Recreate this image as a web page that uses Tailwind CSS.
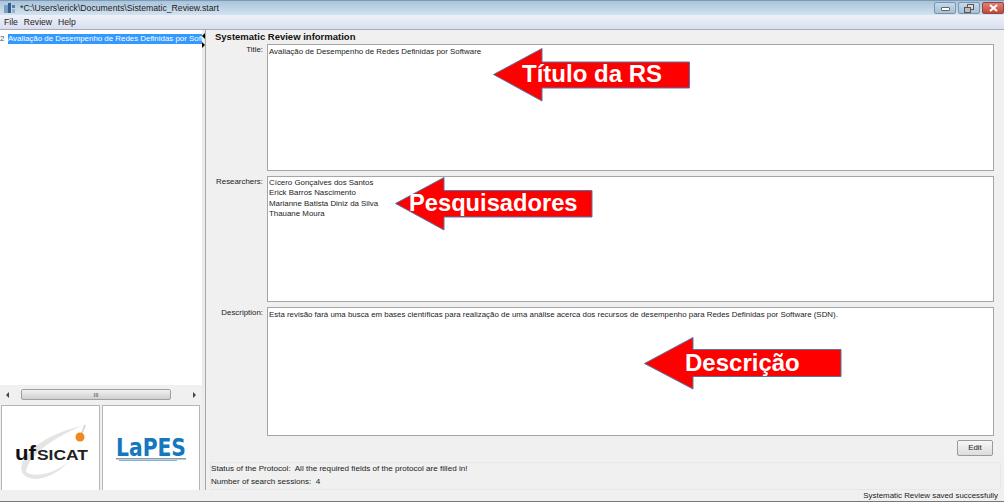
<!DOCTYPE html>
<html>
<head>
  <title>Systematic Review</title>
  <meta charset="UTF-8">
  <script src="https://cdn.jsdelivr.net/npm/@tailwindcss/browser@4"></script>
</head>
<body class="relative w-[1004px] h-[502px] overflow-hidden bg-[#f0f0f0] font-['Liberation_Sans',sans-serif] text-[7.9px] text-[#222]">

  <!-- title bar -->
  <div class="h-[15px] flex items-center justify-between border-t border-[#7f9ab5] bg-gradient-to-b from-[#a9c4da] to-[#d3e3f0]">
    <div class="flex items-center gap-[3px] pl-[3px]">
      <svg width="13" height="12" viewBox="0 0 13 12"><rect x="1" y="3" width="4" height="8" fill="#7f9cbc"/><rect x="5" y="1" width="3" height="10" fill="#2d5f96"/><rect x="9" y="3" width="3" height="3" fill="#5b7fa8"/><rect x="9" y="7" width="3" height="4" fill="#9bb2c9"/></svg>
      <span class="pl-[1px] pt-[1px] text-[8.7px] text-[#1b1b1b]">*C:\Users\erick\Documents\Sistematic_Review.start</span>
    </div>
    <div class="flex gap-[2px] h-[12px]">
      <div class="w-[22px] flex items-center justify-center border border-[#7b95ae] rounded-[2px] bg-gradient-to-b from-[#c5d9e9] to-[#a5c0d6]"><div class="w-[9px] h-[4px] mt-[2px] bg-white border border-[#666] rounded-[1px]"></div></div>
      <div class="w-[22px] flex items-center justify-center border border-[#7b95ae] rounded-[2px] bg-gradient-to-b from-[#c5d9e9] to-[#a5c0d6]">
        <svg width="10" height="9" viewBox="0 0 10 9"><rect x="3.5" y="0.5" width="6" height="5" fill="#ddd" stroke="#555"/><rect x="0.5" y="3.5" width="6" height="5" fill="#bbb" stroke="#555"/></svg>
      </div>
      <div class="w-[22px] flex items-center justify-center border border-[#8a4a40] rounded-[2px] bg-gradient-to-b from-[#dd8273] to-[#c4473a]">
        <svg width="9" height="8" viewBox="0 0 9 8"><path d="M1 1 L8 7 M8 1 L1 7" stroke="#fff" stroke-width="2"/></svg>
      </div>
    </div>
  </div>

  <!-- menu bar -->
  <div class="h-[15px] flex items-center gap-[6px] pl-[4px] pt-[1px] bg-gradient-to-b from-[#eef1f9] to-[#d9dff0] border-b border-[#a9acb3] text-[8.6px]">
    <span>File</span><span>Review</span><span>Help</span>
  </div>

  <div class="h-[460px] flex">
    <!-- left pane -->
    <div class="w-[202px] shrink-0 flex flex-col">
      <div class="h-[355px] bg-white pt-[4px] overflow-hidden">
        <div class="flex items-center h-[10px]">
          <span class="w-[8px] shrink-0 text-[#456] text-[8px] leading-none">2</span>
          <div class="w-[194px] h-[10px] leading-[10px] bg-[#3399ff] text-white whitespace-nowrap">Avaliação de Desempenho de Redes Definidas por Soft</div>
        </div>
      </div>
      <!-- horizontal scrollbar -->
      <div class="h-[20px] pt-[4px] flex items-start bg-[#f0f0f0]">
        <span class="w-0 h-0 mt-[3px] ml-[6px] border-y-[3px] border-y-transparent border-r-[3px] border-r-[#444]"></span>
        <div class="w-[150px] h-[11px] ml-[12px] flex items-center justify-center border border-[#a0a0a0] rounded-[2px] bg-gradient-to-b from-[#f2f2f2] to-[#cfcfcf] text-[6px] leading-none text-[#444]">III</div>
        <span class="w-0 h-0 mt-[3px] ml-[22px] border-y-[3px] border-y-transparent border-l-[3px] border-l-[#444]"></span>
      </div>
      <!-- logos -->
      <div class="h-[85px] flex gap-[2px] pl-[1px]">
        <div class="w-[99px] bg-white border border-[#b5b5b5] border-b-0 flex items-center justify-center">
          <svg width="97" height="84" viewBox="0 0 97 84">
            <path d="M21 68 C 12 54, 40 28, 80 20 C 50 32, 26 50, 24 66 C 32 72, 52 68, 66 56 C 52 72, 30 78, 21 68 Z" fill="#e4e4e4"/>
            <path d="M78 32 L83 19" stroke="#d8d8d8" stroke-width="2"/>
            <circle cx="78" cy="31" r="4.5" fill="#ee8a1d"/>
            <text x="13" y="54" font-family="Liberation Sans" font-size="21" font-weight="700" fill="#111" textLength="21" lengthAdjust="spacingAndGlyphs">uf</text>
            <text x="35" y="54" font-family="Liberation Sans" font-size="14" font-weight="700" fill="#222" textLength="51" lengthAdjust="spacingAndGlyphs">SICAT</text>
          </svg>
        </div>
        <div class="w-[98px] bg-white border border-[#b5b5b5] border-b-0 flex items-center justify-center">
          <svg width="96" height="84" viewBox="0 0 96 84">
            <text x="13" y="50" font-family="DejaVu Sans" font-size="24" font-weight="700" fill="#1577bd" textLength="70" lengthAdjust="spacingAndGlyphs">LaPES</text>
            <rect x="13" y="52" width="70" height="1.5" fill="#8a9aa8"/>
            <rect x="16" y="54" width="58" height="1" fill="#7cb4dc"/>
          </svg>
        </div>
      </div>
    </div>

    <!-- divider -->
    <div class="w-[4px] shrink-0 flex flex-col items-center gap-[3px] pt-[3px] bg-[#ececec] border-r border-[#a9a9a9]">
      <span class="w-0 h-0 border-y-[3px] border-y-transparent border-r-[3px] border-r-black"></span>
      <span class="w-0 h-0 border-y-[3px] border-y-transparent border-l-[3px] border-l-black"></span>
    </div>

    <!-- right pane -->
    <div class="flex-1 pl-[5px] pr-[10px] flex flex-col">
      <div class="h-[14px] pl-[4px] pt-[1px] flex items-center font-bold text-[9.5px] text-[#111]">Systematic Review information</div>
      <div class="flex h-[127px] mb-[5px]">
        <span class="w-[56px] pr-[4px] text-right">Title:</span>
        <div class="flex-1 bg-white border border-[#a5a5a5] pl-[1px] pt-[1px]">Avaliação de Desempenho de Redes Definidas por Software</div>
      </div>
      <div class="flex h-[126px] mb-[5px]">
        <span class="w-[56px] pr-[4px] text-right">Researchers:</span>
        <div class="flex-1 bg-white border border-[#a5a5a5] pl-[1px] pt-[1px] leading-[10.4px]">
          <div>Cícero Gonçalves dos Santos</div>
          <div>Erick Barros Nascimento</div>
          <div>Marianne Batista Diniz da Silva</div>
          <div>Thauane Moura</div>
        </div>
      </div>
      <div class="flex h-[129px]">
        <span class="w-[56px] pr-[4px] text-right">Description:</span>
        <div class="flex-1 bg-white border border-[#a5a5a5] pl-[1px] pt-[1px]">Esta revisão fará uma busca em bases científicas para realização de uma análise acerca dos recursos de desempenho para Redes Definidas por Software (SDN).</div>
      </div>
      <div class="h-[26px] pb-[3px] flex items-center justify-end pr-[1px]">
        <div class="w-[36px] h-[16px] flex items-center justify-center border border-[#9a9a9a] rounded-[2px] bg-gradient-to-b from-[#f7f7f7] to-[#dcdcdc]">Edit</div>
      </div>
      <div class="h-[28px] -ml-[1px] -mr-[7px] border border-[#e4e8ea] rounded-[2px] flex flex-col justify-around text-[8.1px]">
        <div>Status of the Protocol:&nbsp; All the required fields of the protocol are filled in!</div>
        <div>Number of search sessions:&nbsp; 4</div>
      </div>
    </div>
  </div>

  <!-- status bar -->
  <div class="h-[12px] flex items-center justify-end pr-[6px] border-b border-[#777] bg-[#f0f0f0]">Systematic Review saved successfully</div>

  <!-- annotation arrows laid over the window -->
  <svg class="absolute left-[493px] top-[48px]" width="198" height="54" viewBox="0 0 198 54"><polygon points="0.5,26.5 49,0.5 49,14 196.5,14 196.5,40 49,40 49,53 " fill="#ff0000" stroke="#5378a8"/></svg>
  <span class="absolute left-[522px] top-[59px] font-bold text-[24px] leading-[30px] text-white">Título da RS</span>

  <svg class="absolute left-[395px] top-[177px]" width="198" height="54" viewBox="0 0 198 54"><polygon points="0.5,26.5 49,0.5 49,13.5 197,13.5 197,40 49,40 49,53 " fill="#ff0000" stroke="#5378a8"/></svg>
  <span class="absolute left-[409px] top-[188px] font-bold text-[23.7px] leading-[30px] text-white">Pesquisadores</span>

  <svg class="absolute left-[644px] top-[337px]" width="198" height="54" viewBox="0 0 198 54"><polygon points="0.5,26.5 49,0.5 49,12.5 197,12.5 197,39.5 49,39.5 49,52 " fill="#ff0000" stroke="#5378a8"/></svg>
  <span class="absolute left-[685px] top-[348px] font-bold text-[24px] leading-[30px] text-white">Descrição</span>
</body>
</html>
